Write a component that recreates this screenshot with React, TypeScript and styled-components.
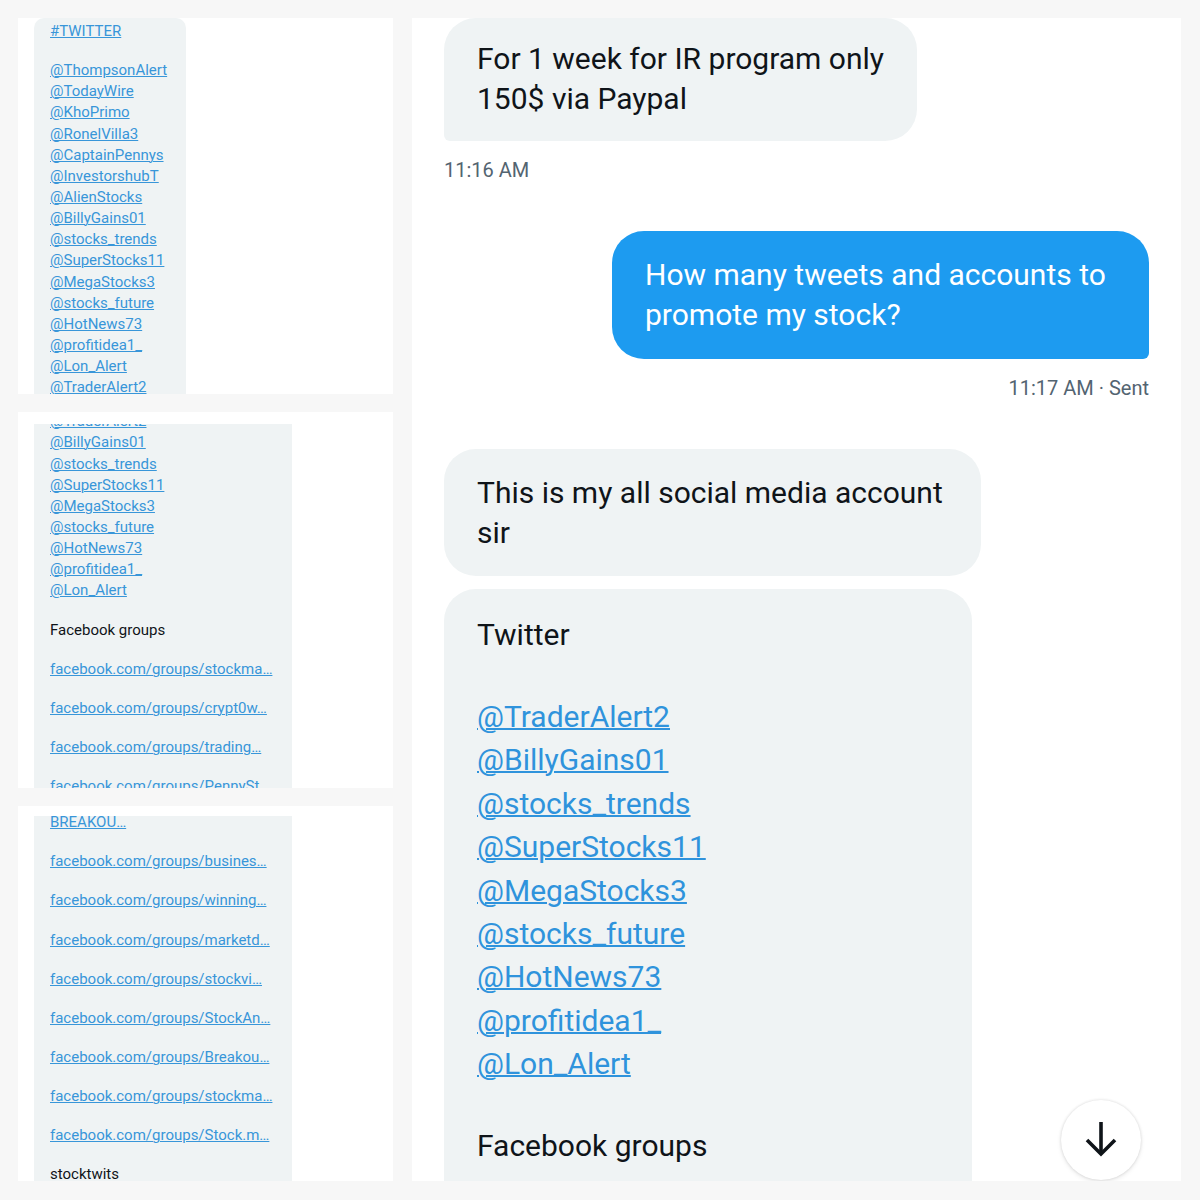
import React from "react";
import styled, { createGlobalStyle } from "styled-components";

const GlobalStyle = createGlobalStyle`
  html, body { margin: 0; padding: 0; background: #f7f7f7; }
  body { font-family: Roboto, "Liberation Sans", Arial, sans-serif; color: #0f1419; }
  * { box-sizing: border-box; }
`;

const Page = styled.div`
  width: 1200px;
  height: 1200px;
  padding: 18px 19px 19px 18px;
  display: grid;
  grid-template-columns: 375px 769px;
  column-gap: 19px;
  background: #f7f7f7;
`;

const LeftColumn = styled.div`
  display: flex;
  flex-direction: column;
  gap: 18px;
`;

const ShotPanel = styled.div<{ $h: number; $top: number }>`
  height: ${(p) => p.$h}px;
  background: #ffffff;
  padding: ${(p) => p.$top}px 0 0 16px;
  overflow: hidden;
`;

const SmallBubble = styled.div<{ $w: number; $rounded?: boolean }>`
  width: ${(p) => p.$w}px;
  height: 100%;
  background: #eff3f4;
  padding-left: 16px;
  overflow: hidden;
  border-radius: ${(p) => (p.$rounded ? "10px 10px 0 0" : "0")};
`;

const SmallContent = styled.div<{ $shift: number }>`
  margin-top: ${(p) => p.$shift}px;
  display: flex;
  flex-direction: column;
`;

const SmallLink = styled.a`
  display: block;
  font-size: 15px;
  line-height: 21.15px;
  height: 21.15px;
  color: #3896d9;
  text-decoration: underline;
  text-decoration-thickness: 1px;
  white-space: nowrap;
`;

const SmallText = styled.div`
  font-size: 15px;
  line-height: 21.15px;
  height: 21.15px;
  color: #0f1419;
  white-space: nowrap;
`;

const Gap = styled.div<{ $h: number }>`
  height: ${(p) => p.$h}px;
  flex: none;
`;

const ChatPanel = styled.div`
  position: relative;
  background: #ffffff;
  padding: 0 32px;
  display: flex;
  flex-direction: column;
  overflow: hidden;
`;

const Bubble = styled.div<{
  $w: number;
  $sent?: boolean;
  $grow?: boolean;
  $radius: string;
  $pad: string;
  $mt: number;
}>`
  width: ${(p) => p.$w}px;
  flex: ${(p) => (p.$grow ? "1 0 auto" : "none")};
  margin-top: ${(p) => p.$mt}px;
  align-self: ${(p) => (p.$sent ? "flex-end" : "flex-start")};
  background: ${(p) => (p.$sent ? "#1d9bf0" : "#eff3f4")};
  color: ${(p) => (p.$sent ? "#ffffff" : "#0f1419")};
  border-radius: ${(p) => p.$radius};
  padding: ${(p) => p.$pad};
  font-size: 30px;
  line-height: 40px;
  white-space: nowrap;
`;

const Stamp = styled.div<{ $sent?: boolean }>`
  margin-top: 17px;
  font-size: 20px;
  line-height: 24px;
  color: #536471;
  align-self: ${(p) => (p.$sent ? "flex-end" : "flex-start")};
  white-space: nowrap;
`;

const BigLink = styled.a`
  display: block;
  font-size: 30px;
  line-height: 43.4px;
  color: #2f93dc;
  text-decoration: underline;
  text-decoration-thickness: 2px;
`;

const BigText = styled.div`
  font-size: 30px;
  line-height: 40px;
`;

const ScrollButton = styled.div`
  position: absolute;
  right: 40px;
  bottom: 1px;
  width: 80px;
  height: 80px;
  border-radius: 50%;
  background: #ffffff;
  box-shadow: 0 0 3px rgba(0, 0, 0, 0.14), 0 2px 5px rgba(0, 0, 0, 0.08);
  display: flex;
  align-items: center;
  justify-content: center;
`;

const panel1 = [
  "@ThompsonAlert",
  "@TodayWire",
  "@KhoPrimo",
  "@RonelVilla3",
  "@CaptainPennys",
  "@InvestorshubT",
  "@AlienStocks",
  "@BillyGains01",
  "@stocks_trends",
  "@SuperStocks11",
  "@MegaStocks3",
  "@stocks_future",
  "@HotNews73",
  "@profitidea1_",
  "@Lon_Alert",
  "@TraderAlert2",
];

const panel2Handles = [
  "@TraderAlert2",
  "@BillyGains01",
  "@stocks_trends",
  "@SuperStocks11",
  "@MegaStocks3",
  "@stocks_future",
  "@HotNews73",
  "@profitidea1_",
  "@Lon_Alert",
];

const panel2Groups = [
  "facebook.com/groups/stockma…",
  "facebook.com/groups/crypt0w…",
  "facebook.com/groups/trading…",
  "facebook.com/groups/PennySt",
];

const panel3Groups = [
  "BREAKOU…",
  "facebook.com/groups/busines…",
  "facebook.com/groups/winning…",
  "facebook.com/groups/marketd…",
  "facebook.com/groups/stockvi…",
  "facebook.com/groups/StockAn…",
  "facebook.com/groups/Breakou…",
  "facebook.com/groups/stockma…",
  "facebook.com/groups/Stock.m…",
];

const bigHandles = [
  "@TraderAlert2",
  "@BillyGains01",
  "@stocks_trends",
  "@SuperStocks11",
  "@MegaStocks3",
  "@stocks_future",
  "@HotNews73",
  "@profitidea1_",
  "@Lon_Alert",
];

const ArrowDown = () => (
  <svg width="40" height="40" viewBox="0 0 40 40" fill="none">
    <path d="M20 2 V34" stroke="#0f1419" strokeWidth="3.6" />
    <path d="M6 20 L20 34 L34 20" stroke="#0f1419" strokeWidth="3.6" strokeLinejoin="miter" />
  </svg>
);

export default function App() {
  return (
    <>
      <GlobalStyle />
      <Page>
        <LeftColumn>
          <ShotPanel $h={376} $top={0}>
            <SmallBubble $w={152} $rounded>
              <SmallContent $shift={3}>
                <SmallLink>#TWITTER</SmallLink>
                <Gap $h={18} />
                {panel1.map((h, i) => (
                  <SmallLink key={i}>{h}</SmallLink>
                ))}
              </SmallContent>
            </SmallBubble>
          </ShotPanel>
          <ShotPanel $h={376} $top={12}>
            <SmallBubble $w={258}>
              <SmallContent $shift={-12.75}>
                {panel2Handles.map((h, i) => (
                  <SmallLink key={i}>{h}</SmallLink>
                ))}
                <Gap $h={18} />
                <SmallText>Facebook groups</SmallText>
                {panel2Groups.map((g, i) => (
                  <React.Fragment key={i}>
                    <Gap $h={17.9} />
                    <SmallLink>{g}</SmallLink>
                  </React.Fragment>
                ))}
              </SmallContent>
            </SmallBubble>
          </ShotPanel>
          <ShotPanel $h={375} $top={10}>
            <SmallBubble $w={258}>
              <SmallContent $shift={-3.6}>
                {panel3Groups.map((g, i) => (
                  <React.Fragment key={i}>
                    {i > 0 && <Gap $h={17.9} />}
                    <SmallLink>{g}</SmallLink>
                  </React.Fragment>
                ))}
                <Gap $h={17.9} />
                <SmallText>stocktwits</SmallText>
              </SmallContent>
            </SmallBubble>
          </ShotPanel>
        </LeftColumn>

        <ChatPanel>
          <Bubble $w={473} $mt={0} $radius="32px 32px 32px 6px" $pad="21px 32px 22px 33px">
            For 1 week for IR program only
            <br />
            150$ via Paypal
          </Bubble>
          <Stamp>11:16 AM</Stamp>

          <Bubble $w={537} $sent $mt={49} $radius="32px 32px 6px 32px" $pad="24px 32px 24px 33px">
            How many tweets and accounts to
            <br />
            promote my stock?
          </Bubble>
          <Stamp $sent>11:17 AM · Sent</Stamp>

          <Bubble $w={537} $mt={49} $radius="32px" $pad="24px 32px 23px 33px">
            This is my all social media account
            <br />
            sir
          </Bubble>

          <Bubble $w={528} $grow $mt={13} $radius="32px 32px 0 0" $pad="26px 32px 0 33px">
            <BigText>Twitter</BigText>
            <Gap $h={40} />
            {bigHandles.map((h, i) => (
              <BigLink key={i}>{h}</BigLink>
            ))}
            <Gap $h={40} />
            <BigText>Facebook groups</BigText>
          </Bubble>

          <ScrollButton>
            <ArrowDown />
          </ScrollButton>
        </ChatPanel>
      </Page>
    </>
  );
}
